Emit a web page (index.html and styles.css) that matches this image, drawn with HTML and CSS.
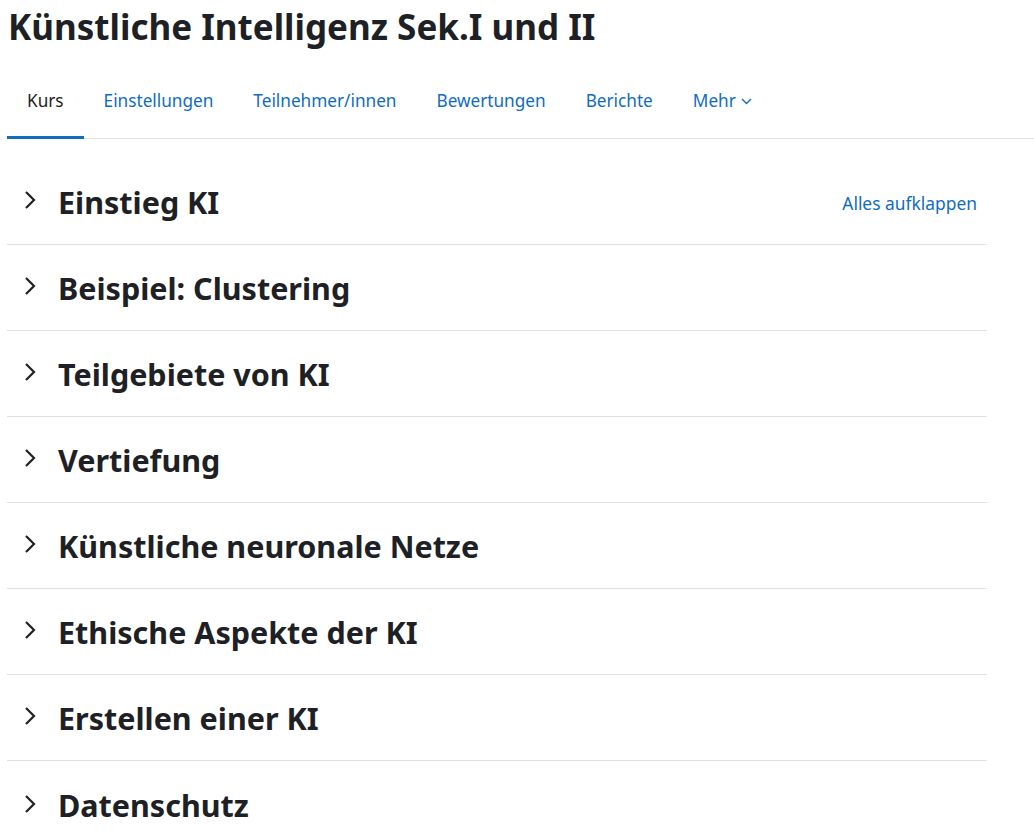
FILE: index.html
```html
<!DOCTYPE html>
<html lang="de">
<head>
<meta charset="utf-8">
<title>Künstliche Intelligenz Sek.I und II</title>
<link rel="stylesheet" href="styles.css">
</head>
<body>
<div class="page">
  <h1 class="title">Künstliche Intelligenz Sek.I und II</h1>
  <nav class="tabs">
    <a class="tab active">Kurs</a>
    <a class="tab">Einstellungen</a>
    <a class="tab">Teilnehmer/innen</a>
    <a class="tab">Bewertungen</a>
    <a class="tab">Berichte</a>
    <a class="tab">Mehr <svg class="caret" width="11" height="7" viewBox="0 0 11 7"><path d="M1 1l4.5 4.5L10 1" fill="none" stroke="currentColor" stroke-width="1.4"/></svg></a>
  </nav>
  <div class="sections">
    <div class="section">
      <svg class="chev" width="12" height="20" viewBox="0 0 12 20"><path d="M2 2l8 8-8 8" fill="none" stroke="currentColor" stroke-width="2.2"/></svg>
      <h3 class="sname">Einstieg KI</h3>
      <a class="expand">Alles aufklappen</a>
    </div>
    <div class="section">
      <svg class="chev" width="12" height="20" viewBox="0 0 12 20"><path d="M2 2l8 8-8 8" fill="none" stroke="currentColor" stroke-width="2.2"/></svg>
      <h3 class="sname">Beispiel: Clustering</h3>
    </div>
    <div class="section">
      <svg class="chev" width="12" height="20" viewBox="0 0 12 20"><path d="M2 2l8 8-8 8" fill="none" stroke="currentColor" stroke-width="2.2"/></svg>
      <h3 class="sname">Teilgebiete von KI</h3>
    </div>
    <div class="section">
      <svg class="chev" width="12" height="20" viewBox="0 0 12 20"><path d="M2 2l8 8-8 8" fill="none" stroke="currentColor" stroke-width="2.2"/></svg>
      <h3 class="sname">Vertiefung</h3>
    </div>
    <div class="section">
      <svg class="chev" width="12" height="20" viewBox="0 0 12 20"><path d="M2 2l8 8-8 8" fill="none" stroke="currentColor" stroke-width="2.2"/></svg>
      <h3 class="sname">Künstliche neuronale Netze</h3>
    </div>
    <div class="section">
      <svg class="chev" width="12" height="20" viewBox="0 0 12 20"><path d="M2 2l8 8-8 8" fill="none" stroke="currentColor" stroke-width="2.2"/></svg>
      <h3 class="sname">Ethische Aspekte der KI</h3>
    </div>
    <div class="section">
      <svg class="chev" width="12" height="20" viewBox="0 0 12 20"><path d="M2 2l8 8-8 8" fill="none" stroke="currentColor" stroke-width="2.2"/></svg>
      <h3 class="sname">Erstellen einer KI</h3>
    </div>
    <div class="section last">
      <svg class="chev" width="12" height="20" viewBox="0 0 12 20"><path d="M2 2l8 8-8 8" fill="none" stroke="currentColor" stroke-width="2.2"/></svg>
      <h3 class="sname">Datenschutz</h3>
    </div>
  </div>
</div>
</body>
</html>
```

FILE: styles.css
```css
html, body {
  margin: 0;
  padding: 0;
  background: #fff;
}
body {
  font-family: "Noto Sans", "Open Sans", sans-serif;
  color: #1d2125;
  overflow: hidden;
}
.page {
  width: 980px;
  padding-left: 7px;
}
.title {
  margin: 0;
  padding: 4px 0 0 1px;
  font-size: 35px;
  font-weight: 700;
  line-height: 46px;
}
.tabs {
  display: flex;
  margin-top: 16px;
  border-bottom: 1px solid #dee2e6;
  width: 1027px;
}
.tab {
  display: flex;
  align-items: center;
  gap: 5px;
  padding: 0 20px 1px;
  height: 73px;
  font-size: 17.2px;
  color: #0f6cbf;
  border-bottom: 3px solid transparent;
  margin-bottom: -1px;
  box-sizing: border-box;
}
.tab.active {
  color: #1d2125;
  border-bottom-color: #0f6cbf;
}
.caret {
  margin-top: 2px;
}
.sections {
  margin-top: 20px;
}
.section {
  display: flex;
  align-items: center;
  height: 85px;
  border-bottom: 1px solid #dee2e6;
  color: #1d2125;
}
.section.last {
  border-bottom: none;
  height: 88px;
}
.chev {
  margin-left: 17px;
  margin-right: 22px;
  flex: none;
  margin-top: -3px;
}
.sname {
  margin: 0;
  font-size: 30.5px;
  font-weight: 700;
  line-height: 40px;
  flex: 1;
}
.expand {
  font-size: 17.4px;
  color: #0f6cbf;
  margin-right: 10px;
  margin-top: 2px;
}
```
